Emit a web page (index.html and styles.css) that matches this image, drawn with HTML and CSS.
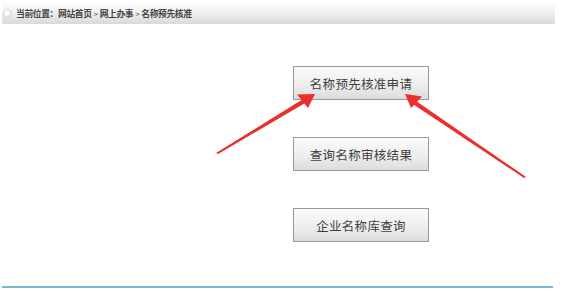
FILE: index.html
```html
<!DOCTYPE html>
<html lang="zh">
<head>
<meta charset="utf-8">
<link rel="stylesheet" href="styles.css">
</head>
<body>
<div class="page">
  <div class="crumb">
    <span class="dot"></span>
    <span class="crumb-text">当前位置：网站首页<span class="sep">&gt;</span>网上办事<span class="sep">&gt;</span>名称预先核准</span>
  </div>
  <div class="content">
    <div class="btns">
      <div class="btn">名称预先核准申请</div>
      <div class="btn">查询名称审核结果</div>
      <div class="btn">企业名称库查询</div>
    </div>
  </div>
  <div class="bottom-line"></div>
  <svg class="arrows" width="562" height="291" viewBox="0 0 562 291">
    <polygon points="216,151 304,96.5 306,100.5 218,152" fill="#ea2f2c"/>
    <polygon points="315,92 297,92.5 308,106" fill="#ea2f2c"/>
    <polygon points="526,175 411,95.5 409,99.5 524,176" fill="#ea2f2c"/>
    <polygon points="405,92 422,94.5 411,106" fill="#ea2f2c"/>
  </svg>
</div>
</body>
</html>
```
FILE: styles.css
```css
html, body {
  margin: 0;
  padding: 0;
  background: #fff;
}
.page {
  width: 562px;
  height: 291px;
  position: relative;
  font-family: "Noto Sans CJK SC", "Liberation Sans", sans-serif;
}
.crumb {
  margin: 2px 7px 0 2px;
  height: 22px;
  background: linear-gradient(to bottom, #ffffff 0%, #f1f1f1 45%, #d9d9d9 100%);
  display: flex;
  align-items: center;
  font-size: 8.8px;
  color: #444;
  font-weight: bold;
}
.dot {
  width: 7px;
  height: 7px;
  border-radius: 50%;
  background: radial-gradient(circle at 40% 40%, #ffffff 30%, #cfcfcf 100%);
  border: 1px solid #d8d8d8;
  margin-left: 1px;
  margin-right: 4px;
}
.crumb-text {
  letter-spacing: -0.4px;
}
.sep {
  font-weight: normal;
  font-size: 8px;
  margin: 0 2px;
}
.content {
  height: 262px;
}
.btns {
  display: flex;
  flex-direction: column;
  align-items: flex-start;
  gap: 37px;
  padding-left: 293px;
  padding-top: 42px;
}
.btn {
  width: 134px;
  height: 32px;
  border: 1px solid #9a9a9a;
  background: linear-gradient(to bottom, #fbfbfb 0%, #ececec 60%, #dcdcdc 100%);
  color: #3f3f3f;
  font-size: 12.5px;
  display: flex;
  align-items: center;
  justify-content: center;
  letter-spacing: 0.3px;
}
.arrows {
  position: absolute;
  left: 0;
  top: 0;
  pointer-events: none;
}
.bottom-line {
  margin-left: 2px;
  width: 551px;
  height: 2px;
  background: #7ab9d0;
}
```
